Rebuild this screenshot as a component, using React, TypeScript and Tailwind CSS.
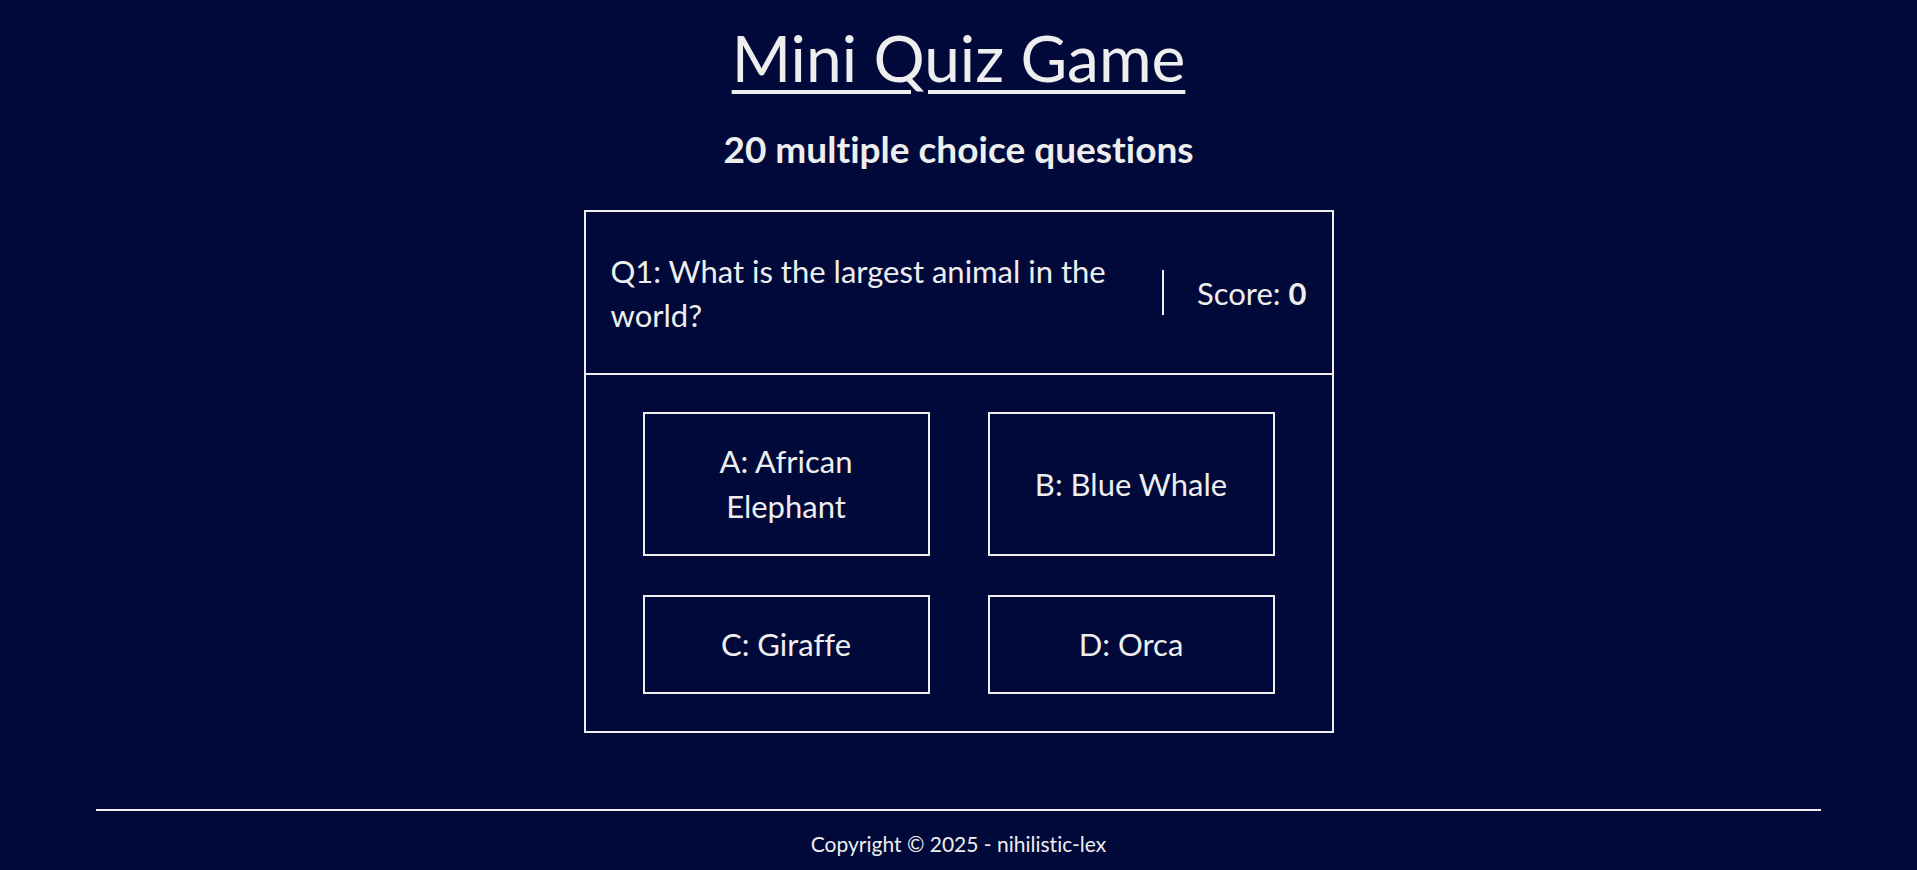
import React from "react";

const answers = ["A: African Elephant", "B: Blue Whale", "C: Giraffe", "D: Orca"];

const App = () => {
  return (
    <div className="min-h-[870px] w-full bg-[#000939] text-[#eeeeee] font-['Lato',sans-serif] [font-variant-ligatures:none] flex flex-col items-center">
      {/* Heading */}
      <h1 className="mt-[18px] text-[64px] leading-[80px] underline decoration-[4px] underline-offset-[8px]">Mini Quiz Game</h1>
      <h2 className="mt-[28px] text-[37px] font-bold leading-[46px]">20 multiple choice questions</h2>

      {/* Quiz card */}
      <div className="mt-[38px] w-[750px] border-2 border-[#eeeeee]">
        <div className="flex items-center h-[163px] px-[25px] border-b-2 border-[#eeeeee]">
          <p className="flex-1 text-[31px] leading-[44px] pr-[30px]">Q1: What is the largest animal in the world?</p>
          <div className="w-[2px] h-[45px] bg-[#eeeeee]" />
          <p className="pl-[33px] text-[31px] leading-[44px]">
            Score: <span className="font-bold">0</span>
          </p>
        </div>
        <div className="grid grid-cols-2 gap-x-[58px] gap-y-[39px] px-[57px] pt-[37px] pb-[37px]">
          {answers.map((a) => (
            <button key={a} className="border-2 border-[#eeeeee] px-[20px] py-[25px] text-[31px] leading-[45px] text-center">
              {a}
            </button>
          ))}
        </div>
      </div>

      {/* Footer */}
      <footer className="mt-[76px] w-[90%] border-t-2 border-[#eeeeee] flex justify-center">
        <p className="mt-[17px] text-[21px]">Copyright © 2025 - nihilistic-lex</p>
      </footer>
    </div>
  );
};

export default App;
